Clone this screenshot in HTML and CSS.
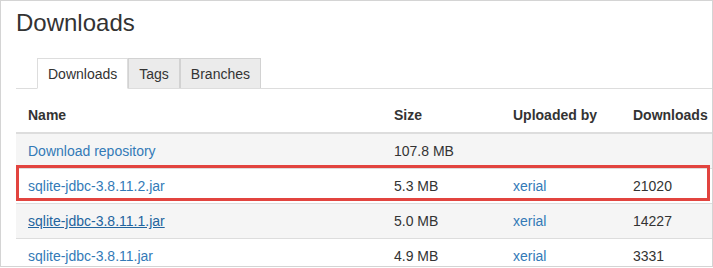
FILE: index.html
```html
<!DOCTYPE html>
<html lang="en">
<head>
    <meta charset="UTF-8">
    <meta name="viewport" content="width=device-width, initial-scale=1.0">
    <title>Downloads</title>
    <link rel="stylesheet" href="styles.css">
</head>
<body>
    <div class="frame">
        <h1 class="page-title">Downloads</h1>

        <ul class="tabs">
            <li class="tab active"><a href="#downloads">Downloads</a></li>
            <li class="tab"><a href="#tags">Tags</a></li>
            <li class="tab"><a href="#branches">Branches</a></li>
        </ul>

        <div class="table-wrap">
            <table class="files">
                <thead>
                    <tr>
                        <th class="col-name">Name</th>
                        <th class="col-size">Size</th>
                        <th class="col-user">Uploaded by</th>
                        <th class="col-count">Downloads</th>
                    </tr>
                </thead>
                <tbody>
                    <tr>
                        <td><a href="#">Download repository</a></td>
                        <td>107.8 MB</td>
                        <td></td>
                        <td></td>
                    </tr>
                    <tr>
                        <td><a href="#">sqlite-jdbc-3.8.11.2.jar</a></td>
                        <td>5.3 MB</td>
                        <td><a href="#">xerial</a></td>
                        <td>21020</td>
                    </tr>
                    <tr>
                        <td><a href="#" class="hovered">sqlite-jdbc-3.8.11.1.jar</a></td>
                        <td>5.0 MB</td>
                        <td><a href="#">xerial</a></td>
                        <td>14227</td>
                    </tr>
                    <tr>
                        <td><a href="#">sqlite-jdbc-3.8.11.jar</a></td>
                        <td>4.9 MB</td>
                        <td><a href="#">xerial</a></td>
                        <td>3331</td>
                    </tr>
                </tbody>
            </table>
            <!-- annotation box around the latest jar -->
            <div class="highlight"></div>
        </div>
    </div>
</body>
</html>
```

FILE: styles.css
```css
* {
    margin: 0;
    padding: 0;
    box-sizing: border-box;
}

body {
    font-family: "Liberation Sans", Arial, sans-serif;
    font-size: 14px;
    line-height: 20px;
    color: #333;
    background: #fff;
}

a {
    color: #337ab7;
    text-decoration: none;
}

.frame {
    width: 713px;
    height: 267px;
    border: 1px solid #d4d4d4;
    padding: 9px 0 0 15px;
    overflow: hidden;
}

.page-title {
    font-size: 24px;
    line-height: 26px;
    font-weight: normal;
    color: #333;
    margin-bottom: 22px;
}

.tabs {
    display: flex;
    list-style: none;
    padding-left: 21px;
    border-bottom: 1px solid #ddd;
}

.tab a {
    display: block;
    padding: 5px 10px 4px;
    color: #333;
    background: #ebebeb;
    border: 1px solid #d2d2d2;
    border-bottom: none;
}

.tab.active a {
    background: #fff;
    border-color: #ddd;
    border-bottom: 1px solid #fff;
    margin-bottom: -1px;
}

.table-wrap {
    position: relative;
    margin-top: 9px;
}

.files {
    width: 100%;
    border-collapse: collapse;
    table-layout: fixed;
}

.files th,
.files td {
    text-align: left;
    padding: 7px 12px;
    white-space: nowrap;
}

.files th {
    font-weight: bold;
    border-bottom: 2px solid #ddd;
}

.files td {
    border-top: 1px solid #ddd;
}

.files tbody tr:nth-child(odd) {
    background: #f5f5f5;
}

.col-name {
    width: 366px;
}

.col-size {
    width: 119px;
}

.col-user {
    width: 120px;
}

.files a.hovered {
    color: #23649e;
    text-decoration: underline;
}

.highlight {
    position: absolute;
    top: 67px;
    left: 0;
    width: 694px;
    height: 36px;
    border: 3px solid #e2443f;
}
```
